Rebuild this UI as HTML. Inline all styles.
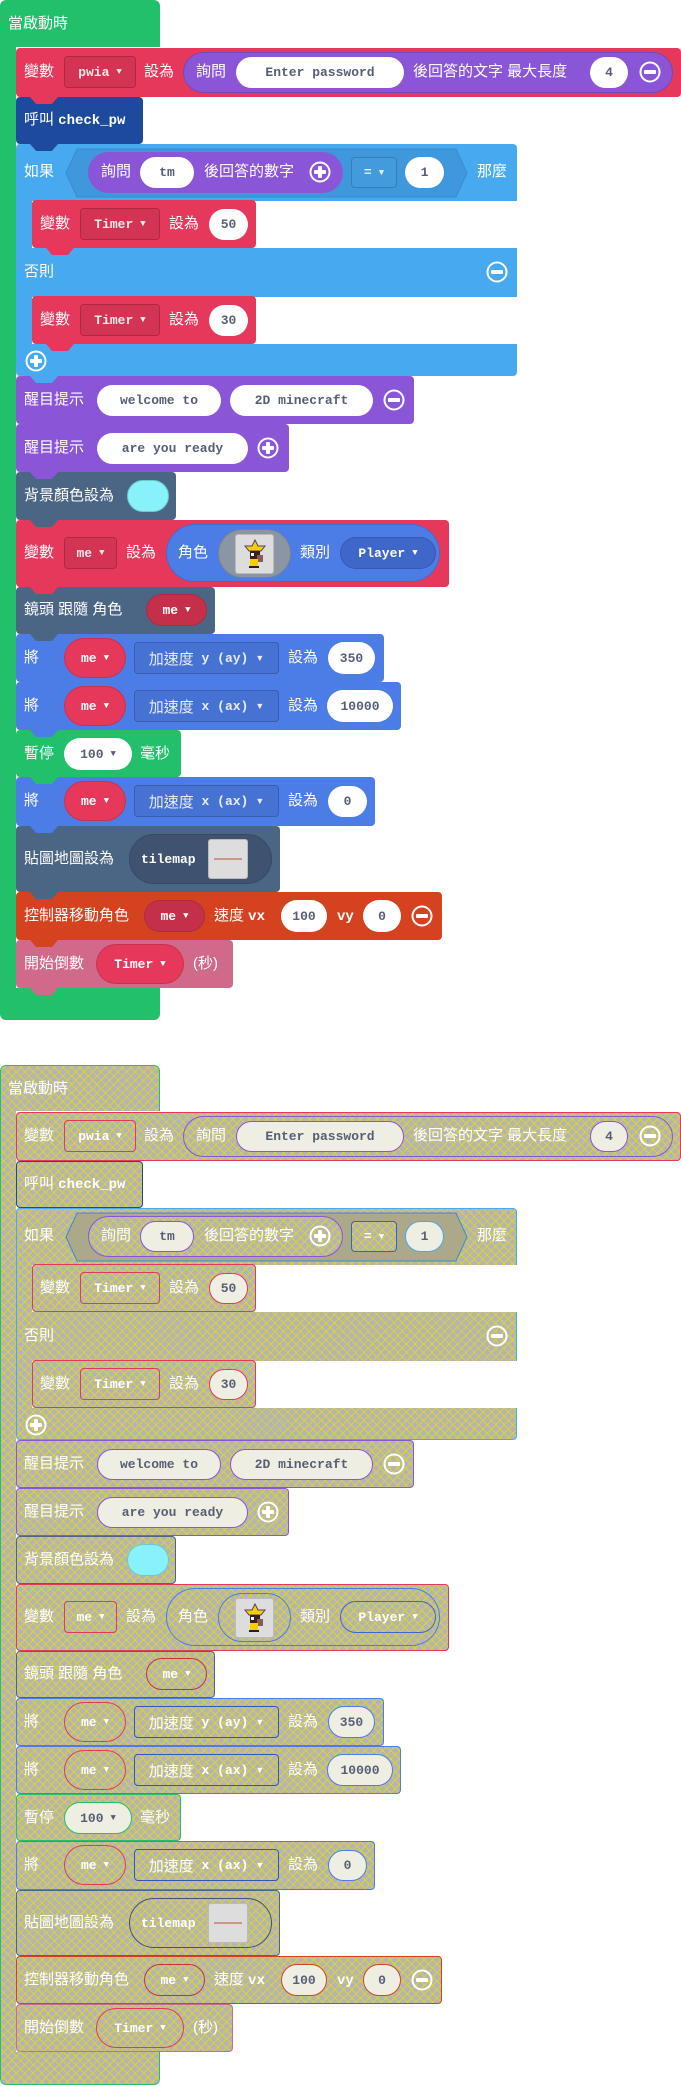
<!DOCTYPE html>
<html><head><meta charset="utf-8"><style>
*{margin:0;padding:0;box-sizing:border-box}
body{width:681px;height:2085px;background:#fff;position:relative;overflow:hidden;font-family:"Liberation Sans","Noto Sans CJK TC",sans-serif}
.sec{position:absolute;left:0;width:681px;height:1022px}
.b{position:absolute;background:var(--c);border-radius:4px}
.tab{position:absolute;width:28px;height:7px;background:var(--c);clip-path:polygon(0 0,100% 0,78% 100%,22% 100%);z-index:4}
.l{position:absolute;color:#fff;font-size:15px;line-height:20px;white-space:nowrap;z-index:6}
.f{position:absolute;display:flex;align-items:center;justify-content:center;white-space:nowrap;z-index:5;font:bold 13px "Liberation Mono",monospace;color:#fff}
.dd{background:var(--c);border:1px solid rgba(0,0,0,.18);border-radius:4px;filter:brightness(.92)}
.w{background:#fff;border-radius:17px;color:#575E75}
.p{background:var(--c);border-radius:20px;border:1px solid rgba(0,0,0,.12)}
.ar{font-size:9px;margin-left:7px}
.q{color:#c33;font-size:10px;position:absolute;top:1px}
svg.i{position:absolute;z-index:7}
.g .b,.g .tab,.g .dd,.g .p{background:repeating-linear-gradient(45deg,rgba(222,214,40,.85) 0 1px,transparent 1px 6px),repeating-linear-gradient(-45deg,rgba(222,214,40,.85) 0 1px,transparent 1px 6px),#b4b4b2;filter:none}
.g .b,.g .dd,.g .p{border:1px solid var(--c)}
.g .w{background:#EFEEE2;border:1px solid var(--c)}
.g .f{color:#fff}
.g .w{color:#575E75}
</style></head><body>

<div class="sec" style="top:0">
<!-- green hat -->
<div class="b" style="--c:#22C06B;left:0;top:0;width:160px;height:1020px;border-radius:6px"></div>
<div style="position:absolute;left:16px;top:47px;width:150px;height:941px;background:#fff"></div>
<div class="l" style="left:8px;top:14px">當啟動時</div>

<!-- row1 -->
<div class="b" style="--c:#E6385A;left:16px;top:48px;width:665px;height:49px"></div>
<div class="tab" style="--c:#E6385A;left:30px;top:97px"></div>
<div class="l" style="left:24px;top:62px">變數</div>
<div class="f dd" style="--c:#E6385A;left:64px;top:56px;width:72px;height:32px">pwia<span class="ar">▼</span></div>
<div class="l" style="left:144px;top:62px">設為</div>
<div class="b" style="--c:#8A55D7;left:183px;top:52px;width:490px;height:41px;border-radius:21px;border:1px solid rgba(0,0,0,.15)"></div>
<div class="l" style="left:196px;top:62px">詢問</div>
<div class="f w" style="--c:#8A55D7;left:236px;top:57px;width:168px;height:31px">Enter password</div>
<div class="l" style="left:413px;top:62px">後回答的文字 最大長度</div>
<div class="f w" style="--c:#8A55D7;left:590px;top:57px;width:38px;height:31px">4</div>
<svg class="i" style="left:639px;top:61px" width="22" height="22"><circle cx="11" cy="11" r="9.5" fill="none" stroke="#fff" stroke-width="2"/><rect x="5" y="9" width="12" height="4" rx="1" fill="#fff"/></svg>

<!-- call -->
<div class="b" style="--c:#1E4A9E;left:16px;top:97px;width:127px;height:47px"></div>
<div class="tab" style="--c:#1E4A9E;left:30px;top:144px"></div>
<div class="l" style="left:24px;top:110px">呼叫 <b style="font-family:'Liberation Mono',monospace;font-size:14px">check_pw</b></div>

<!-- if -->
<div class="b" style="--c:#47A9EF;left:16px;top:144px;width:501px;height:232px"></div>
<div style="position:absolute;left:32px;top:201px;width:485px;height:47px;background:#fff"></div>
<div style="position:absolute;left:32px;top:297px;width:485px;height:47px;background:#fff"></div>
<div class="tab" style="--c:#47A9EF;left:30px;top:376px"></div>
<div class="l" style="left:24px;top:162px">如果</div>
<svg class="i" style="left:65px;top:148px;z-index:3" width="403" height="50"><polygon points="12,1 391,1 402,25 391,49 12,49 1,25" fill="#4098DC" stroke="#3A8CCB"/></svg>
<div class="b" style="--c:#8A55D7;left:88px;top:152px;width:255px;height:41px;border-radius:21px;z-index:4"></div>
<div class="l" style="left:101px;top:162px">詢問</div>
<div class="f w" style="left:140px;top:157px;width:54px;height:31px">tm</div>
<div class="l" style="left:204px;top:162px">後回答的數字</div>
<svg class="i" style="left:309px;top:161px" width="22" height="22"><circle cx="11" cy="11" r="9.5" fill="none" stroke="#fff" stroke-width="2"/><rect x="5" y="9" width="12" height="4" rx="1" fill="#fff"/><rect x="9" y="5" width="4" height="12" rx="1" fill="#fff"/></svg>
<div class="f dd" style="--c:#47A9EF;left:351px;top:157px;width:46px;height:31px">=<span class="ar">▼</span></div>
<div class="f w" style="left:405px;top:157px;width:39px;height:31px">1</div>
<div class="l" style="left:477px;top:162px">那麼</div>

<div class="b" style="--c:#E6385A;left:32px;top:200px;width:224px;height:48px"></div>
<div class="tab" style="--c:#E6385A;left:46px;top:248px"></div>
<div class="l" style="left:40px;top:214px">變數</div>
<div class="f dd" style="--c:#E6385A;left:80px;top:208px;width:80px;height:32px">Timer<span class="ar">▼</span></div>
<div class="l" style="left:169px;top:214px">設為</div>
<div class="f w" style="left:209px;top:209px;width:39px;height:31px">50</div>

<div class="l" style="left:24px;top:262px">否則</div>
<svg class="i" style="left:486px;top:261px" width="22" height="22"><circle cx="11" cy="11" r="9.5" fill="none" stroke="#fff" stroke-width="2"/><rect x="5" y="9" width="12" height="4" rx="1" fill="#fff"/></svg>

<div class="b" style="--c:#E6385A;left:32px;top:296px;width:224px;height:48px"></div>
<div class="tab" style="--c:#E6385A;left:46px;top:344px"></div>
<div class="l" style="left:40px;top:310px">變數</div>
<div class="f dd" style="--c:#E6385A;left:80px;top:304px;width:80px;height:32px">Timer<span class="ar">▼</span></div>
<div class="l" style="left:169px;top:310px">設為</div>
<div class="f w" style="left:209px;top:305px;width:39px;height:31px">30</div>
<svg class="i" style="left:25px;top:350px" width="22" height="22"><circle cx="11" cy="11" r="9.5" fill="none" stroke="#fff" stroke-width="2"/><rect x="5" y="9" width="12" height="4" rx="1" fill="#fff"/><rect x="9" y="5" width="4" height="12" rx="1" fill="#fff"/></svg>

<!-- splash 1 -->
<div class="b" style="--c:#8A55D7;left:16px;top:376px;width:398px;height:48px"></div>
<div class="tab" style="--c:#8A55D7;left:30px;top:424px"></div>
<div class="l" style="left:24px;top:390px">醒目提示</div>
<div class="f w" style="left:97px;top:385px;width:124px;height:31px">welcome to</div>
<div class="f w" style="left:230px;top:385px;width:143px;height:31px">2D minecraft</div>
<svg class="i" style="left:383px;top:389px" width="22" height="22"><circle cx="11" cy="11" r="9.5" fill="none" stroke="#fff" stroke-width="2"/><rect x="5" y="9" width="12" height="4" rx="1" fill="#fff"/></svg>

<div class="b" style="--c:#8A55D7;left:16px;top:424px;width:273px;height:48px"></div>
<div class="tab" style="--c:#8A55D7;left:30px;top:472px"></div>
<div class="l" style="left:24px;top:438px">醒目提示</div>
<div class="f w" style="left:97px;top:433px;width:151px;height:31px">are you ready</div>
<svg class="i" style="left:257px;top:437px" width="22" height="22"><circle cx="11" cy="11" r="9.5" fill="none" stroke="#fff" stroke-width="2"/><rect x="5" y="9" width="12" height="4" rx="1" fill="#fff"/><rect x="9" y="5" width="4" height="12" rx="1" fill="#fff"/></svg>

<!-- bg color -->
<div class="b" style="--c:#4B6584;left:16px;top:472px;width:160px;height:48px"></div>
<div class="tab" style="--c:#4B6584;left:30px;top:520px"></div>
<div class="l" style="left:24px;top:486px">背景顏色設為</div>
<div class="f w" style="left:127px;top:480px;width:42px;height:32px;background:#88F1FA;border:1px solid #6cc">&nbsp;</div>

<!-- var me sprite -->
<div class="b" style="--c:#E6385A;left:16px;top:520px;width:433px;height:67px"></div>
<div class="tab" style="--c:#E6385A;left:30px;top:587px"></div>
<div class="l" style="left:24px;top:543px">變數</div>
<div class="f dd" style="--c:#E6385A;left:64px;top:537px;width:53px;height:32px">me<span class="ar">▼</span></div>
<div class="l" style="left:126px;top:543px">設為</div>
<div class="b p" style="--c:#4C7CE6;left:166px;top:524px;width:274px;height:58px;border-radius:29px;z-index:3"></div>
<div class="l" style="left:178px;top:543px">角色</div>
<div class="f p" style="--c:#8B95A3;left:218px;top:529px;width:73px;height:49px;border-radius:25px"><div style="width:39px;height:40px;background:#ddd;border:1px solid #bbb;border-radius:3px;display:flex;align-items:center;justify-content:center"><svg width="24" height="30" viewBox="0 0 24 30"><polygon points="12,1 15,7 22,7 18,12 6,12 2,7 9,7" fill="#f4d000" stroke="#5a3a6a"/><rect x="7" y="12" width="10" height="8" fill="#3a2020"/><rect x="8" y="14" width="3" height="3" fill="#fff"/><rect x="14" y="16" width="6" height="7" fill="#8a5a5a"/><rect x="7" y="20" width="8" height="8" fill="#f4d000"/><rect x="6" y="27" width="10" height="2" fill="#222"/></svg></div></div>
<div class="l" style="left:300px;top:543px">類別</div>
<div class="f p" style="--c:#3F66C9;left:340px;top:537px;width:96px;height:32px">Player<span class="ar">▼</span></div>

<!-- camera -->
<div class="b" style="--c:#4B6584;left:16px;top:587px;width:199px;height:47px"></div>
<div class="tab" style="--c:#4B6584;left:30px;top:634px"></div>
<div class="l" style="left:24px;top:600px">鏡頭 跟隨 角色</div>
<div class="f p" style="--c:#C4304A;left:146px;top:594px;width:61px;height:32px">me<span class="ar">▼</span></div>

<!-- set ay -->
<div class="b" style="--c:#4C7CE6;left:16px;top:634px;width:368px;height:48px"></div>
<div class="tab" style="--c:#4C7CE6;left:30px;top:682px"></div>
<div class="l" style="left:24px;top:648px">將</div>
<div class="f p" style="--c:#E6385A;left:64px;top:638px;width:62px;height:40px">me<span class="ar">▼</span></div>
<div class="f dd" style="--c:#4C7CE6;left:134px;top:642px;width:145px;height:32px;font-family:'Liberation Sans','Noto Sans CJK TC',sans-serif;font-weight:normal;font-size:15px">加速度 <b style="font-family:'Liberation Mono',monospace;font-size:13px">&nbsp;y (ay)</b><span class="ar">▼</span></div>
<div class="l" style="left:288px;top:648px">設為</div>
<div class="f w" style="left:328px;top:642px;width:47px;height:32px">350</div>

<!-- set ax 10000 -->
<div class="b" style="--c:#4C7CE6;left:16px;top:682px;width:385px;height:48px"></div>
<div class="tab" style="--c:#4C7CE6;left:30px;top:730px"></div>
<div class="l" style="left:24px;top:696px">將</div>
<div class="f p" style="--c:#E6385A;left:64px;top:686px;width:62px;height:40px">me<span class="ar">▼</span></div>
<div class="f dd" style="--c:#4C7CE6;left:134px;top:690px;width:145px;height:32px;font-family:'Liberation Sans','Noto Sans CJK TC',sans-serif;font-weight:normal;font-size:15px">加速度 <b style="font-family:'Liberation Mono',monospace;font-size:13px">&nbsp;x (ax)</b><span class="ar">▼</span></div>
<div class="l" style="left:288px;top:696px">設為</div>
<div class="f w" style="left:327px;top:690px;width:66px;height:32px">10000</div>

<!-- pause -->
<div class="b" style="--c:#22C06B;left:16px;top:730px;width:165px;height:47px"></div>
<div class="tab" style="--c:#22C06B;left:30px;top:777px"></div>
<div class="l" style="left:24px;top:744px">暫停</div>
<div class="f w" style="left:64px;top:738px;width:68px;height:32px">100<span class="ar">▼</span></div>
<div class="l" style="left:140px;top:744px">毫秒</div>

<!-- set ax 0 -->
<div class="b" style="--c:#4C7CE6;left:16px;top:777px;width:359px;height:49px"></div>
<div class="tab" style="--c:#4C7CE6;left:30px;top:826px"></div>
<div class="l" style="left:24px;top:791px">將</div>
<div class="f p" style="--c:#E6385A;left:64px;top:781px;width:62px;height:40px">me<span class="ar">▼</span></div>
<div class="f dd" style="--c:#4C7CE6;left:134px;top:785px;width:145px;height:32px;font-family:'Liberation Sans','Noto Sans CJK TC',sans-serif;font-weight:normal;font-size:15px">加速度 <b style="font-family:'Liberation Mono',monospace;font-size:13px">&nbsp;x (ax)</b><span class="ar">▼</span></div>
<div class="l" style="left:288px;top:791px">設為</div>
<div class="f w" style="left:328px;top:786px;width:39px;height:31px">0</div>

<!-- tilemap -->
<div class="b" style="--c:#4B6584;left:16px;top:826px;width:264px;height:66px"></div>
<div class="tab" style="--c:#4B6584;left:30px;top:892px"></div>
<div class="l" style="left:24px;top:849px">貼圖地圖設為</div>
<div class="f p" style="--c:#3F5370;left:129px;top:834px;width:143px;height:50px;border-radius:25px;justify-content:flex-start;padding-left:11px">tilemap<div style="margin-left:12px;width:40px;height:40px;background:#ddd;border:1px solid #bbb;border-radius:3px;display:flex;align-items:center;justify-content:center"><div style="width:28px;height:2px;background:#c98"></div></div></div>

<!-- controller -->
<div class="b" style="--c:#D44220;left:16px;top:892px;width:426px;height:48px"></div>
<div class="tab" style="--c:#D44220;left:30px;top:940px"></div>
<div class="l" style="left:24px;top:906px">控制器移動角色</div>
<div class="f p" style="--c:#C4304A;left:144px;top:900px;width:61px;height:32px">me<span class="ar">▼</span></div>
<div class="l" style="left:214px;top:906px">速度 <b style="font-family:'Liberation Mono',monospace;font-size:14px">vx</b></div>
<div class="f w" style="left:281px;top:900px;width:46px;height:32px">100</div>
<div class="l" style="left:337px;top:906px"><b style="font-family:'Liberation Mono',monospace;font-size:14px">vy</b></div>
<div class="f w" style="left:363px;top:900px;width:38px;height:32px">0</div>
<svg class="i" style="left:411px;top:905px" width="22" height="22"><circle cx="11" cy="11" r="9.5" fill="none" stroke="#fff" stroke-width="2"/><rect x="5" y="9" width="12" height="4" rx="1" fill="#fff"/></svg>

<!-- countdown -->
<div class="b" style="--c:#D1698A;left:16px;top:940px;width:217px;height:48px"></div>
<div class="tab" style="--c:#D1698A;left:30px;top:988px"></div>
<div class="l" style="left:24px;top:954px">開始倒數</div>
<div class="f p" style="--c:#E6385A;left:96px;top:944px;width:88px;height:40px">Timer<span class="ar">▼</span></div>
<div class="l" style="left:193px;top:954px">(秒)</div>
</div>

<div class="sec g" style="top:1064px">
<div class="b" style="--c:#22C06B;left:0;top:1px;width:160px;height:1020px;border-radius:6px"></div>
<div style="position:absolute;left:16px;top:47px;width:150px;height:941px;background:#fff"></div>
<div class="l" style="left:8px;top:15px">當啟動時</div>

<div class="b" style="--c:#E6385A;left:16px;top:48px;width:665px;height:49px"></div>
<div class="l" style="left:24px;top:62px">變數</div>
<div class="f dd" style="--c:#E6385A;left:64px;top:56px;width:72px;height:32px">pwia<span class="ar">▼</span></div>
<div class="l" style="left:144px;top:62px">設為</div>
<div class="b p" style="--c:#8A55D7;left:183px;top:52px;width:490px;height:41px;border-radius:21px"></div>
<div class="l" style="left:196px;top:62px">詢問</div>
<div class="f w" style="--c:#8A55D7;left:236px;top:57px;width:168px;height:31px">Enter password</div>
<div class="l" style="left:413px;top:62px">後回答的文字 最大長度</div>
<div class="f w" style="--c:#8A55D7;left:590px;top:57px;width:38px;height:31px">4</div>
<svg class="i" style="left:639px;top:61px" width="22" height="22"><circle cx="11" cy="11" r="9.5" fill="none" stroke="#fff" stroke-width="2"/><rect x="5" y="9" width="12" height="4" rx="1" fill="#fff"/></svg>

<div class="b" style="--c:#1E4A9E;left:16px;top:97px;width:127px;height:47px"></div>
<div class="l" style="left:24px;top:110px">呼叫 <b style="font-family:'Liberation Mono',monospace;font-size:14px">check_pw</b></div>

<div class="b" style="--c:#47A9EF;left:16px;top:144px;width:501px;height:232px"></div>
<div style="position:absolute;left:32px;top:201px;width:485px;height:47px;background:#fff"></div>
<div style="position:absolute;left:32px;top:297px;width:485px;height:47px;background:#fff"></div>
<div class="l" style="left:24px;top:162px">如果</div>
<svg class="i" style="left:65px;top:148px;z-index:3" width="403" height="50"><polygon points="12,1 391,1 402,25 391,49 12,49 1,25" fill="#aba98a" stroke="#3A8CCB"/></svg>
<div class="b p" style="--c:#8A55D7;left:88px;top:152px;width:255px;height:41px;border-radius:21px;z-index:4"></div>
<div class="l" style="left:101px;top:162px">詢問</div>
<div class="f w" style="--c:#8A55D7;left:140px;top:157px;width:54px;height:31px">tm</div>
<div class="l" style="left:204px;top:162px">後回答的數字</div>
<svg class="i" style="left:309px;top:161px" width="22" height="22"><circle cx="11" cy="11" r="9.5" fill="none" stroke="#fff" stroke-width="2"/><rect x="5" y="9" width="12" height="4" rx="1" fill="#fff"/><rect x="9" y="5" width="4" height="12" rx="1" fill="#fff"/></svg>
<div class="f dd" style="--c:#2a6ea8;left:351px;top:157px;width:46px;height:31px">=<span class="ar">▼</span></div>
<div class="f w" style="--c:#47A9EF;left:405px;top:157px;width:39px;height:31px">1</div>
<div class="l" style="left:477px;top:162px">那麼</div>

<div class="b" style="--c:#E6385A;left:32px;top:200px;width:224px;height:48px"></div>
<div class="l" style="left:40px;top:214px">變數</div>
<div class="f dd" style="--c:#E6385A;left:80px;top:208px;width:80px;height:32px">Timer<span class="ar">▼</span></div>
<div class="l" style="left:169px;top:214px">設為</div>
<div class="f w" style="--c:#E6385A;left:209px;top:209px;width:39px;height:31px">50</div>

<div class="l" style="left:24px;top:262px">否則</div>
<svg class="i" style="left:486px;top:261px" width="22" height="22"><circle cx="11" cy="11" r="9.5" fill="none" stroke="#fff" stroke-width="2"/><rect x="5" y="9" width="12" height="4" rx="1" fill="#fff"/></svg>

<div class="b" style="--c:#E6385A;left:32px;top:296px;width:224px;height:48px"></div>
<div class="l" style="left:40px;top:310px">變數</div>
<div class="f dd" style="--c:#E6385A;left:80px;top:304px;width:80px;height:32px">Timer<span class="ar">▼</span></div>
<div class="l" style="left:169px;top:310px">設為</div>
<div class="f w" style="--c:#E6385A;left:209px;top:305px;width:39px;height:31px">30</div>
<svg class="i" style="left:25px;top:350px" width="22" height="22"><circle cx="11" cy="11" r="9.5" fill="none" stroke="#fff" stroke-width="2"/><rect x="5" y="9" width="12" height="4" rx="1" fill="#fff"/><rect x="9" y="5" width="4" height="12" rx="1" fill="#fff"/></svg>

<div class="b" style="--c:#8A55D7;left:16px;top:376px;width:398px;height:48px"></div>
<div class="l" style="left:24px;top:390px">醒目提示</div>
<div class="f w" style="--c:#8A55D7;left:97px;top:385px;width:124px;height:31px">welcome to</div>
<div class="f w" style="--c:#8A55D7;left:230px;top:385px;width:143px;height:31px">2D minecraft</div>
<svg class="i" style="left:383px;top:389px" width="22" height="22"><circle cx="11" cy="11" r="9.5" fill="none" stroke="#fff" stroke-width="2"/><rect x="5" y="9" width="12" height="4" rx="1" fill="#fff"/></svg>

<div class="b" style="--c:#8A55D7;left:16px;top:424px;width:273px;height:48px"></div>
<div class="l" style="left:24px;top:438px">醒目提示</div>
<div class="f w" style="--c:#8A55D7;left:97px;top:433px;width:151px;height:31px">are you ready</div>
<svg class="i" style="left:257px;top:437px" width="22" height="22"><circle cx="11" cy="11" r="9.5" fill="none" stroke="#fff" stroke-width="2"/><rect x="5" y="9" width="12" height="4" rx="1" fill="#fff"/><rect x="9" y="5" width="4" height="12" rx="1" fill="#fff"/></svg>

<div class="b" style="--c:#4B6584;left:16px;top:472px;width:160px;height:48px"></div>
<div class="l" style="left:24px;top:486px">背景顏色設為</div>
<div class="f w" style="--c:#6cc;left:127px;top:480px;width:42px;height:32px;background:#88F1FA">&nbsp;</div>

<div class="b" style="--c:#E6385A;left:16px;top:520px;width:433px;height:67px"></div>
<div class="l" style="left:24px;top:543px">變數</div>
<div class="f dd" style="--c:#E6385A;left:64px;top:537px;width:53px;height:32px">me<span class="ar">▼</span></div>
<div class="l" style="left:126px;top:543px">設為</div>
<div class="b p" style="--c:#4C7CE6;left:166px;top:524px;width:274px;height:58px;border-radius:29px;z-index:3"></div>
<div class="l" style="left:178px;top:543px">角色</div>
<div class="f p" style="--c:#4C7CE6;left:218px;top:529px;width:73px;height:49px;border-radius:25px"><div style="width:39px;height:40px;background:#ddd;border:1px solid #bbb;border-radius:3px;display:flex;align-items:center;justify-content:center"><svg width="24" height="30" viewBox="0 0 24 30"><polygon points="12,1 15,7 22,7 18,12 6,12 2,7 9,7" fill="#f4d000" stroke="#5a3a6a"/><rect x="7" y="12" width="10" height="8" fill="#3a2020"/><rect x="8" y="14" width="3" height="3" fill="#fff"/><rect x="14" y="16" width="6" height="7" fill="#8a5a5a"/><rect x="7" y="20" width="8" height="8" fill="#f4d000"/><rect x="6" y="27" width="10" height="2" fill="#222"/></svg></div></div>
<div class="l" style="left:300px;top:543px">類別</div>
<div class="f p" style="--c:#3F66C9;left:340px;top:537px;width:96px;height:32px">Player<span class="ar">▼</span></div>

<div class="b" style="--c:#4B6584;left:16px;top:587px;width:199px;height:47px"></div>
<div class="l" style="left:24px;top:600px">鏡頭 跟隨 角色</div>
<div class="f p" style="--c:#C4304A;left:146px;top:594px;width:61px;height:32px">me<span class="ar">▼</span></div>

<div class="b" style="--c:#4C7CE6;left:16px;top:634px;width:368px;height:48px"></div>
<div class="l" style="left:24px;top:648px">將</div>
<div class="f p" style="--c:#E6385A;left:64px;top:638px;width:62px;height:40px">me<span class="ar">▼</span></div>
<div class="f dd" style="--c:#2f57b8;left:134px;top:642px;width:145px;height:32px;font-family:'Liberation Sans','Noto Sans CJK TC',sans-serif;font-weight:normal;font-size:15px">加速度 <b style="font-family:'Liberation Mono',monospace;font-size:13px">&nbsp;y (ay)</b><span class="ar">▼</span></div>
<div class="l" style="left:288px;top:648px">設為</div>
<div class="f w" style="--c:#4C7CE6;left:328px;top:642px;width:47px;height:32px">350</div>

<div class="b" style="--c:#4C7CE6;left:16px;top:682px;width:385px;height:48px"></div>
<div class="l" style="left:24px;top:696px">將</div>
<div class="f p" style="--c:#E6385A;left:64px;top:686px;width:62px;height:40px">me<span class="ar">▼</span></div>
<div class="f dd" style="--c:#2f57b8;left:134px;top:690px;width:145px;height:32px;font-family:'Liberation Sans','Noto Sans CJK TC',sans-serif;font-weight:normal;font-size:15px">加速度 <b style="font-family:'Liberation Mono',monospace;font-size:13px">&nbsp;x (ax)</b><span class="ar">▼</span></div>
<div class="l" style="left:288px;top:696px">設為</div>
<div class="f w" style="--c:#4C7CE6;left:327px;top:690px;width:66px;height:32px">10000</div>

<div class="b" style="--c:#22C06B;left:16px;top:730px;width:165px;height:47px"></div>
<div class="l" style="left:24px;top:744px">暫停</div>
<div class="f w" style="--c:#22C06B;left:64px;top:738px;width:68px;height:32px">100<span class="ar">▼</span></div>
<div class="l" style="left:140px;top:744px">毫秒</div>

<div class="b" style="--c:#4C7CE6;left:16px;top:777px;width:359px;height:49px"></div>
<div class="l" style="left:24px;top:791px">將</div>
<div class="f p" style="--c:#E6385A;left:64px;top:781px;width:62px;height:40px">me<span class="ar">▼</span></div>
<div class="f dd" style="--c:#2f57b8;left:134px;top:785px;width:145px;height:32px;font-family:'Liberation Sans','Noto Sans CJK TC',sans-serif;font-weight:normal;font-size:15px">加速度 <b style="font-family:'Liberation Mono',monospace;font-size:13px">&nbsp;x (ax)</b><span class="ar">▼</span></div>
<div class="l" style="left:288px;top:791px">設為</div>
<div class="f w" style="--c:#4C7CE6;left:328px;top:786px;width:39px;height:31px">0</div>

<div class="b" style="--c:#4B6584;left:16px;top:826px;width:264px;height:66px"></div>
<div class="l" style="left:24px;top:849px">貼圖地圖設為</div>
<div class="f p" style="--c:#3F5370;left:129px;top:834px;width:143px;height:50px;border-radius:25px;justify-content:flex-start;padding-left:11px">tilemap<div style="margin-left:12px;width:40px;height:40px;background:#ddd;border:1px solid #bbb;border-radius:3px;display:flex;align-items:center;justify-content:center"><div style="width:28px;height:2px;background:#c98"></div></div></div>

<div class="b" style="--c:#D44220;left:16px;top:892px;width:426px;height:48px"></div>
<div class="l" style="left:24px;top:906px">控制器移動角色</div>
<div class="f p" style="--c:#C4304A;left:144px;top:900px;width:61px;height:32px">me<span class="ar">▼</span></div>
<div class="l" style="left:214px;top:906px">速度 <b style="font-family:'Liberation Mono',monospace;font-size:14px">vx</b></div>
<div class="f w" style="--c:#D44220;left:281px;top:900px;width:46px;height:32px">100</div>
<div class="l" style="left:337px;top:906px"><b style="font-family:'Liberation Mono',monospace;font-size:14px">vy</b></div>
<div class="f w" style="--c:#D44220;left:363px;top:900px;width:38px;height:32px">0</div>
<svg class="i" style="left:411px;top:905px" width="22" height="22"><circle cx="11" cy="11" r="9.5" fill="none" stroke="#fff" stroke-width="2"/><rect x="5" y="9" width="12" height="4" rx="1" fill="#fff"/></svg>

<div class="b" style="--c:#D1698A;left:16px;top:940px;width:217px;height:48px"></div>
<div class="l" style="left:24px;top:954px">開始倒數</div>
<div class="f p" style="--c:#E6385A;left:96px;top:944px;width:88px;height:40px">Timer<span class="ar">▼</span></div>
<div class="l" style="left:193px;top:954px">(秒)</div>
</div>
</body></html>
